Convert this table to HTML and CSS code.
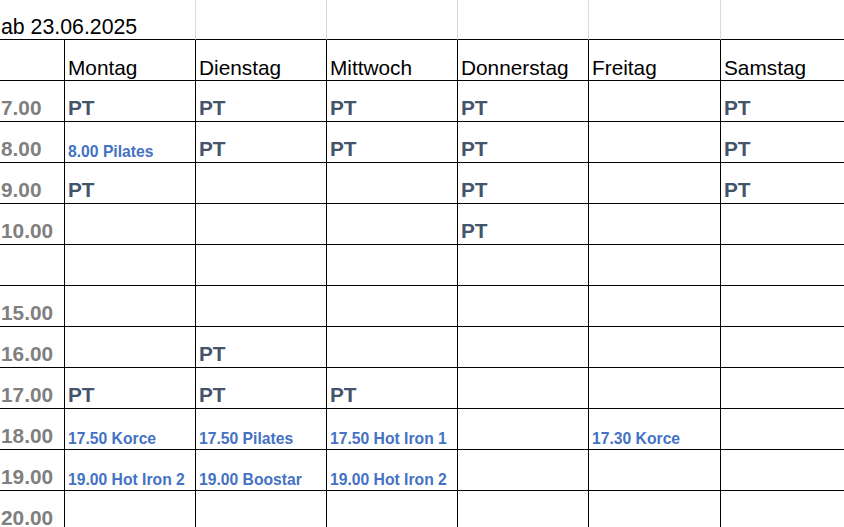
FILE: index.html
```html
<!DOCTYPE html>
<html lang="de">
<head>
<meta charset="utf-8">
<title>Kursplan ab 23.06.2025</title>
<link rel="stylesheet" href="styles.css">
</head>
<body>
<div class="sheet">
  <div class="cell title span2">ab 23.06.2025</div>
  <div class="cell title"></div>
  <div class="cell title"></div>
  <div class="cell title"></div>
  <div class="cell title"></div>
  <div class="cell title last"></div>

  <div class="cell time"></div>
  <div class="cell day">Montag</div>
  <div class="cell day">Dienstag</div>
  <div class="cell day">Mittwoch</div>
  <div class="cell day">Donnerstag</div>
  <div class="cell day">Freitag</div>
  <div class="cell day last">Samstag</div>

  <div class="cell time">7.00</div>
  <div class="cell pt">PT</div>
  <div class="cell pt">PT</div>
  <div class="cell pt">PT</div>
  <div class="cell pt">PT</div>
  <div class="cell"></div>
  <div class="cell pt last">PT</div>

  <div class="cell time">8.00</div>
  <div class="cell course">8.00 Pilates</div>
  <div class="cell pt">PT</div>
  <div class="cell pt">PT</div>
  <div class="cell pt">PT</div>
  <div class="cell"></div>
  <div class="cell pt last">PT</div>

  <div class="cell time">9.00</div>
  <div class="cell pt">PT</div>
  <div class="cell"></div>
  <div class="cell"></div>
  <div class="cell pt">PT</div>
  <div class="cell"></div>
  <div class="cell pt last">PT</div>

  <div class="cell time">10.00</div>
  <div class="cell"></div>
  <div class="cell"></div>
  <div class="cell"></div>
  <div class="cell pt">PT</div>
  <div class="cell"></div>
  <div class="cell last"></div>

  <div class="cell time"></div>
  <div class="cell"></div>
  <div class="cell"></div>
  <div class="cell"></div>
  <div class="cell"></div>
  <div class="cell"></div>
  <div class="cell last"></div>

  <div class="cell time">15.00</div>
  <div class="cell"></div>
  <div class="cell"></div>
  <div class="cell"></div>
  <div class="cell"></div>
  <div class="cell"></div>
  <div class="cell last"></div>

  <div class="cell time">16.00</div>
  <div class="cell"></div>
  <div class="cell pt">PT</div>
  <div class="cell"></div>
  <div class="cell"></div>
  <div class="cell"></div>
  <div class="cell last"></div>

  <div class="cell time">17.00</div>
  <div class="cell pt">PT</div>
  <div class="cell pt">PT</div>
  <div class="cell pt">PT</div>
  <div class="cell"></div>
  <div class="cell"></div>
  <div class="cell last"></div>

  <div class="cell time">18.00</div>
  <div class="cell course">17.50 Korce</div>
  <div class="cell course">17.50 Pilates</div>
  <div class="cell course">17.50 Hot Iron 1</div>
  <div class="cell"></div>
  <div class="cell course">17.30 Korce</div>
  <div class="cell last"></div>

  <div class="cell time">19.00</div>
  <div class="cell course">19.00 Hot Iron 2</div>
  <div class="cell course">19.00 Boostar</div>
  <div class="cell course">19.00 Hot Iron 2</div>
  <div class="cell"></div>
  <div class="cell"></div>
  <div class="cell last"></div>

  <div class="cell time">20.00</div>
  <div class="cell"></div>
  <div class="cell"></div>
  <div class="cell"></div>
  <div class="cell"></div>
  <div class="cell"></div>
  <div class="cell last"></div>
</div>
</body>
</html>
```

FILE: styles.css
```css
html, body {
  margin: 0;
  padding: 0;
  background: #ffffff;
  overflow: hidden;
}

.sheet {
  display: grid;
  grid-template-columns: 65px 131px 131px 131px 131px 132px 1fr;
  grid-template-rows: 40px repeat(12, 41px);
  width: 844px;
  font-family: "Liberation Sans", Arial, sans-serif;
  color: #000;
}

.cell {
  box-sizing: border-box;
  display: flex;
  align-items: flex-end;
  white-space: nowrap;
  border-bottom: 1px solid #000;
  border-right: 1px solid #000;
  padding: 0 0 3px 3px;
  font-size: 20.8px;
  line-height: 20px;
  overflow: visible;
}

.cell.last {
  border-right: none;
}

.title {
  border-right-color: #dadada;
  font-size: 21.3px;
  padding-left: 1px;
  padding-bottom: 2px;
}

.span2 {
  grid-column: span 2;
}

.day {
  padding-bottom: 2px;
}

.time {
  font-weight: bold;
  color: #7f7f7f;
  padding-left: 1px;
}

.pt {
  font-weight: bold;
  color: #44546a;
}

.course {
  font-weight: bold;
  color: #4472c4;
  font-size: 15.7px;
  line-height: 16px;
  padding-bottom: 2px;
}
```
